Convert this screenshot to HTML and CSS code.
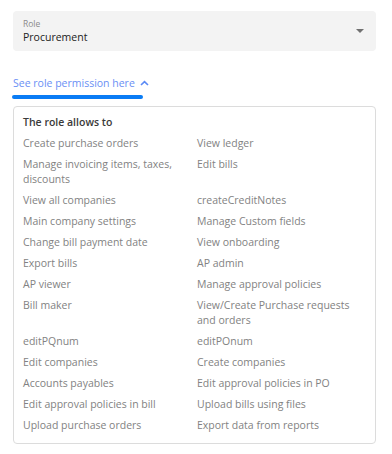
FILE: index.html
```html
<!DOCTYPE html>
<html lang="en">
<head>
  <meta charset="UTF-8">
  <meta name="viewport" content="width=device-width, initial-scale=1.0">
  <title>Role permissions</title>
  <link rel="stylesheet" href="styles.css">
</head>
<body>
  <div class="panel">
    <div class="select-box">
      <div class="select-text">
        <span class="select-label">Role</span>
        <span class="select-value">Procurement</span>
      </div>
      <span class="select-arrow"></span>
    </div>

    <div class="tab-link">
      <span class="tab-text">See role permission here
        <svg class="chevron" width="9" height="6" viewBox="0 0 9 6"><path d="M1 5 L4.5 1.6 L8 5" fill="none" stroke="#5b8af5" stroke-width="1.6"/></svg>
      </span>
      <span class="tab-bar"></span>
    </div>

    <div class="perm-card">
      <h3>The role allows to</h3>
      <ul class="perm-list">
        <li>Create purchase orders</li>
        <li>View ledger</li>
        <li>Manage invoicing items, taxes, discounts</li>
        <li>Edit bills</li>
        <li>View all companies</li>
        <li>createCreditNotes</li>
        <li>Main company settings</li>
        <li>Manage Custom fields</li>
        <li>Change bill payment date</li>
        <li>View onboarding</li>
        <li>Export bills</li>
        <li>AP admin</li>
        <li>AP viewer</li>
        <li>Manage approval policies</li>
        <li>Bill maker</li>
        <li>View/Create Purchase requests and orders</li>
        <li>editPQnum</li>
        <li>editPOnum</li>
        <li>Edit companies</li>
        <li>Create companies</li>
        <li>Accounts payables</li>
        <li>Edit approval policies in PO</li>
        <li>Edit approval policies in bill</li>
        <li>Upload bills using files</li>
        <li>Upload purchase orders</li>
        <li>Export data from reports</li>
      </ul>
    </div>
  </div>
</body>
</html>
```

FILE: styles.css
```css
* {
  margin: 0;
  padding: 0;
  box-sizing: border-box;
}

body {
  font-family: 'Open Sans', 'Noto Sans', sans-serif;
  background: #fff;
  color: #222;
}

.panel {
  padding: 11px 16px 0 13px;
}

.select-box {
  height: 40px;
  background: #f3f3f3;
  border-radius: 4px;
  display: flex;
  align-items: center;
  justify-content: space-between;
  padding: 1px 12px 0 10px;
}

.select-text {
  display: flex;
  flex-direction: column;
}

.select-label {
  font-size: 8.5px;
  line-height: 12px;
  color: #8a8a8a;
}

.select-value {
  font-size: 10.5px;
  line-height: 15px;
  color: #222;
}

.select-arrow {
  width: 0;
  height: 0;
  border-left: 4px solid transparent;
  border-right: 4px solid transparent;
  border-top: 4px solid #707070;
  margin-top: -1px;
}

.tab-link {
  display: inline-flex;
  flex-direction: column;
  margin-top: 24px;
}

.tab-text {
  font-size: 10.5px;
  line-height: 16px;
  color: #6a8ff5;
  display: flex;
  align-items: center;
  gap: 5px;
}

.chevron {
  margin-right: -6px;
}

.tab-bar {
  display: block;
  height: 4px;
  margin: 4px 0 0 -1px;
  background: #0a7cf5;
  border-radius: 2px;
}

.perm-card {
  margin-top: 7px;
  border: 1px solid #dcdcdc;
  border-radius: 4px;
  padding: 8px 10px 10px 9px;
}

.perm-card h3 {
  font-size: 10.5px;
  line-height: 15px;
  font-weight: 600;
  color: #3a3a3a;
  margin-bottom: 6px;
}

.perm-list {
  list-style: none;
  display: grid;
  grid-template-columns: 174px 1fr;
  row-gap: 6px;
}

.perm-list li {
  font-size: 10.5px;
  line-height: 15px;
  color: #828282;
  padding-right: 14px;
}
```
